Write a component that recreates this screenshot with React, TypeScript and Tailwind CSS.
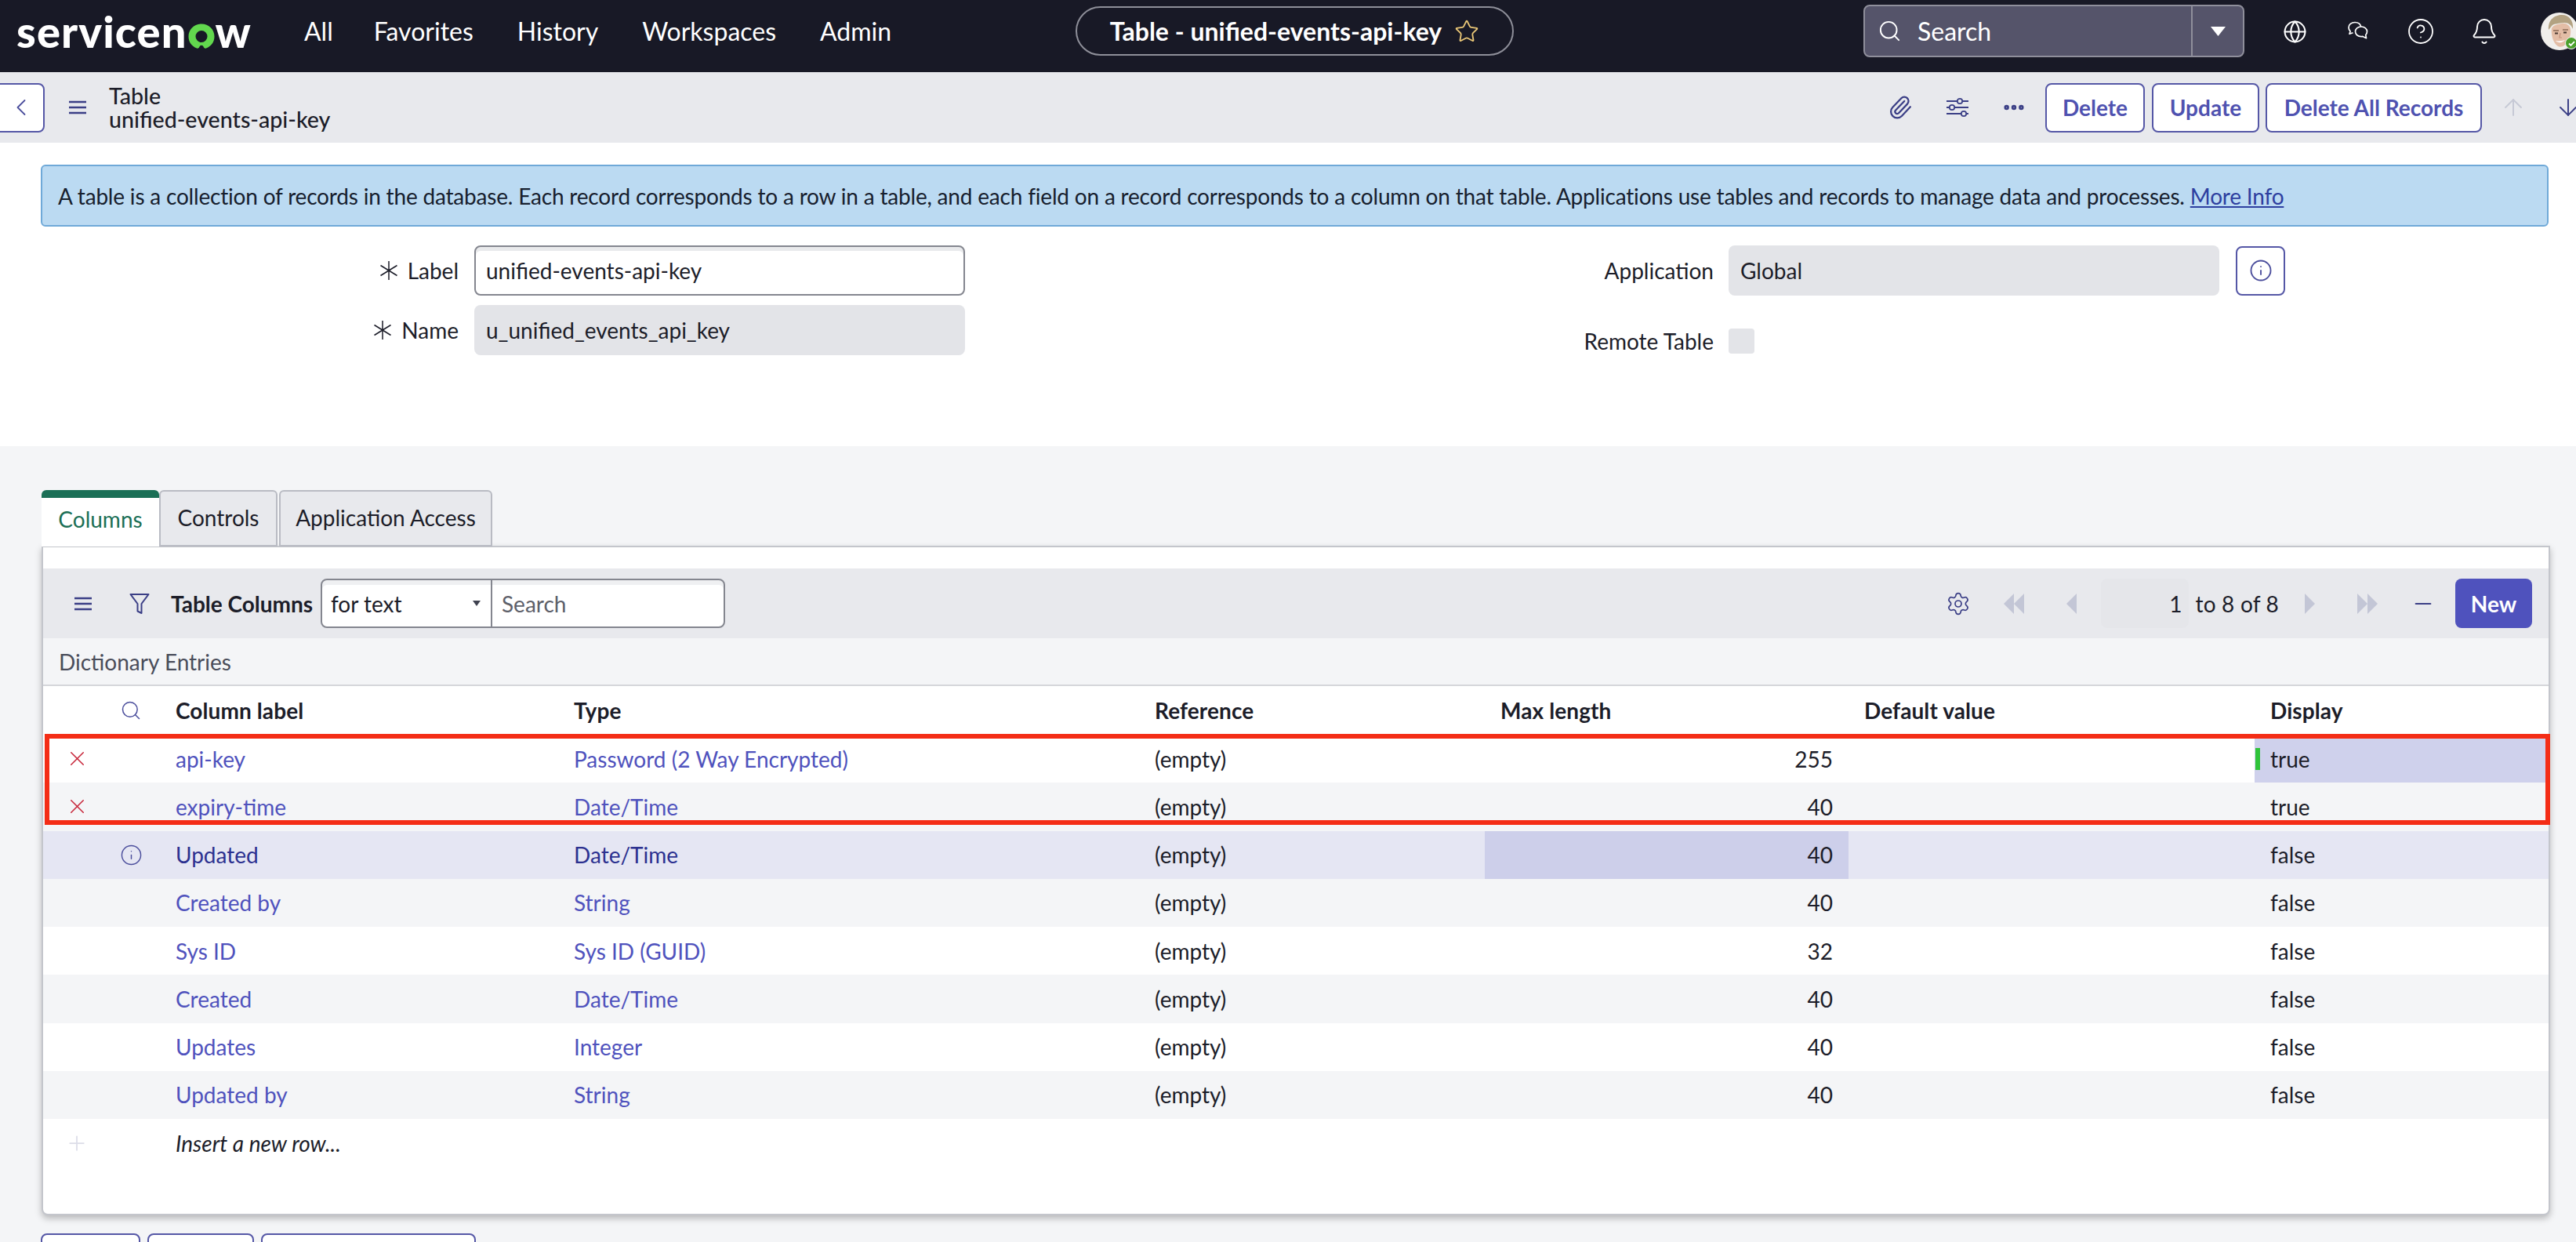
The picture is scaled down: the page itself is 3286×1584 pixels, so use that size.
import React from 'react';
import {
  ArrowDown,
  ArrowUp,
  Bell,
  ChevronLeft,
  CircleHelp,
  Ellipsis,
  Globe,
  Info,
  Minus,
  Paperclip,
  Plus,
  Search,
  Settings,
  Star,
  X,
} from 'lucide-react';

const rows = [
  { label: 'api-key', type: 'Password (2 Way Encrypted)', max: '255', display: 'true', mark: 'x' },
  { label: 'expiry-time', type: 'Date/Time', max: '40', display: 'true', mark: 'x' },
  { label: 'Updated', type: 'Date/Time', max: '40', display: 'false', mark: 'info' },
  { label: 'Created by', type: 'String', max: '40', display: 'false', mark: '' },
  { label: 'Sys ID', type: 'Sys ID (GUID)', max: '32', display: 'false', mark: '' },
  { label: 'Created', type: 'Date/Time', max: '40', display: 'false', mark: '' },
  { label: 'Updates', type: 'Integer', max: '40', display: 'false', mark: '' },
  { label: 'Updated by', type: 'String', max: '40', display: 'false', mark: '' },
];

const gridCols = 'grid grid-cols-[86px_63px_508px_741px_441px_464px_518px_375px]';

const HamburgerIcon = () => (
  <svg width="24" height="20" viewBox="0 0 24 20" fill="none" stroke="#3b3f86" strokeWidth="2.4">
    <path d="M1 3h22M1 10h22M1 17h22" />
  </svg>
);

const SlidersIcon = () => (
  <svg width="28" height="28" viewBox="0 0 28 28" fill="none" stroke="#3b3f86" strokeWidth="1.8" className="shrink-0 ml-[43px]">
    <path d="M0 6h28M0 14h28M0 22h28" />
    <circle cx="17" cy="6" r="3.200" fill="#e8e9ed" />
    <circle cx="7" cy="14" r="3.200" fill="#e8e9ed" />
    <circle cx="22" cy="22" r="3.200" fill="#e8e9ed" />
  </svg>
);

const RequiredMark = () => (
  <svg width="26" height="26" viewBox="0 0 26 26" fill="none" stroke="#1c1d29" strokeWidth="1.5">
    <path d="M13 1v24M2.500 6.500l21 13M23.500 6.500l-21 13" />
  </svg>
);

const ChatIcon = () => (
  <svg width="30" height="28" viewBox="0 0 30 28" fill="none" stroke="white" strokeWidth="1.7" strokeLinejoin="round">
    <path d="M11 2.500c-4.600 0-8 2.800-8 6.700 0 1.900.8 3.500 2.100 4.700l-1.100 3.400 4.500-1.600" />
    <path d="M11 2.500c4 0 7 2.300 7.700 5.500" />
    <path d="M19 8c4.400 0 7.500 2.700 7.500 6.200 0 1.700-.7 3.200-1.800 4.300l.8 4.200-4.600-2.300c-.6.1-1.200.2-1.900.2-4.400 0-7.500-2.800-7.500-6.300S14.600 8 19 8z" />
  </svg>
);

const FunnelIcon = () => (
  <svg width="26" height="28" viewBox="0 0 26 28" fill="none" stroke="#3b3f86" strokeWidth="2" strokeLinejoin="round">
    <path d="M1.500 2h23L15.500 14v12l-5-2.500V14z" />
  </svg>
);

const PageArrow = ({ d, width }: { d: string; width: number }) => (
  <svg width={width} height="26" viewBox={`0 0 ${width} 26`} fill="#c3c6d6">
    <path d={d} />
  </svg>
);

const Avatar = () => (
  <div className="relative w-[48px] h-[48px] shrink-0">
    <svg width="48" height="48" viewBox="0 0 48 48" className="rounded-full">
      <rect width="48" height="48" fill="#f1efec" />
      <path d="M10 22C9 9 18 3 27 3c9 0 15 7 14 18-2-5-5-8-11-8-7 1-12 1-15 3-2 2-3 4-5 6z" fill="#b3a282" />
      <path d="M14 20c2-4 7-5 13-6 5-1 10 2 11 7 1 8-2 16-8 21-4 3-9 2-12-3-3-5-5-12-4-19z" fill="#e3bda6" />
      <path d="M16 23h7M28 22h7" stroke="#8a6a55" strokeWidth="1.6" />
      <path d="M18 26.500h4M29 25.500h4" stroke="#4a3a32" strokeWidth="2" />
      <path d="M25 26l-1 6h3" stroke="#c0917a" strokeWidth="1.2" fill="none" />
      <path d="M19 36c3 3 9 3 12-1-3 1-8 2-12 1z" fill="#fff" />
    </svg>
    <div className="absolute right-[1px] bottom-[1px] w-[16px] h-[16px] rounded-full bg-[#4aa02c] border border-[#f2f2f2] flex items-center justify-center">
      <svg width="9" height="7" viewBox="0 0 11 9" fill="none" stroke="white" strokeWidth="2.4">
        <path d="M1 4.500l3 3 6-6" />
      </svg>
    </div>
  </div>
);

const Logo = () => (
  <div className="flex items-center h-[60px] w-[297px] text-white font-black text-[56px] leading-[60px] tracking-[1.1px]">
    <span>servicen</span>
    <svg width="38" height="36" viewBox="0 0 38 36" className="mt-[13px] mx-[-1px] shrink-0">
      <path
        d="M13 33.500C6.500 31 2.500 25.500 2.500 18.500 2.500 9.500 9.500 2.500 19 2.500s16.500 7 16.500 16c0 7-4 12.500-10.500 15-1.500.6-2.700-.3-3.200-1.500-.6-1.500-1.600-2.300-2.800-2.300s-2.200.8-2.800 2.300c-.5 1.200-1.700 2.100-3.200 1.500zM19 11a7.500 7.500 0 1 0 0 15 7.500 7.500 0 0 0 0-15z"
        fill="#62d84e"
        fillRule="evenodd"
      />
    </svg>
    <span>w</span>
  </div>
);

const OutlineButton = ({ children, className }: { children?: React.ReactNode; className: string }) => (
  <button className={`h-[63px] bg-white border-2 border-[#5557a6] rounded-[8px] text-[#4f52b0] text-[28px] font-bold shrink-0 ${className}`}>
    {children}
  </button>
);

const TopNav = () => (
  <div className="flex items-center h-[92px] bg-[#181926] text-white">
    <div className="flex items-center w-[1372px] pl-[21px] shrink-0 mb-[13px]">
      <Logo />
      <div className="flex items-center gap-[56px] ml-[70px] text-[32px]">
        <span className="mr-[-4px]">All</span>
        <span>Favorites</span>
        <span>History</span>
        <span>Workspaces</span>
        <span>Admin</span>
      </div>
    </div>
    <div className="flex items-center justify-center gap-[16px] w-[559px] h-[63px] border-2 border-[#8e8f99] rounded-full text-[32px] font-bold shrink-0 mb-[13px]">
      <span>Table - unified-events-api-key</span>
      <Star className="w-[32px] h-[32px] text-[#eac777]" strokeWidth={1.4} />
    </div>
    <div className="flex items-center h-[67px] w-[486px] ml-[446px] bg-[#55546a] border-2 border-[#8f8f9b] rounded-[8px] shrink-0 mb-[13px]">
      <div className="flex items-center flex-1 h-full pl-[16px] gap-[20px] border-r-2 border-[#8f8f9b]">
        <Search className="w-[31px] h-[31px] shrink-0 text-white" strokeWidth={1.5} />
        <span className="text-[32px]">Search</span>
      </div>
      <div className="flex items-center justify-center w-[64px]">
        <svg width="19" height="12" viewBox="0 0 19 12" fill="white">
          <path d="M0 0h19L9.500 12z" />
        </svg>
      </div>
    </div>
    <div className="flex items-center ml-[49px] shrink-0 mb-[12px]">
      <Globe className="w-[31px] h-[31px] mr-[50px]" strokeWidth={1.6} />
      <ChatIcon />
      <CircleHelp className="w-[36px] h-[36px] ml-[47px]" strokeWidth={1.2} />
      <Bell className="w-[36px] h-[36px] ml-[45px]" strokeWidth={1.3} />
      <div className="ml-[54px]">
        <Avatar />
      </div>
    </div>
  </div>
);

const SubBar = () => (
  <div className="flex items-center h-[90px] bg-[#e8e9ed] overflow-hidden">
    <div className="flex items-center justify-center w-[65px] h-[63px] ml-[-8px] bg-white border-2 border-[#5557a6] rounded-[8px] shrink-0 pl-[4px]">
      <ChevronLeft className="w-[36px] h-[36px] text-[#4b4e9c]" strokeWidth={1.2} />
    </div>
    <div className="ml-[30px] shrink-0">
      <HamburgerIcon />
    </div>
    <div className="ml-[28px] text-[28.6px] leading-[30px] font-medium text-[#1c1d29] w-[2279px] shrink-0">
      <div>Table</div>
      <div>unified-events-api-key</div>
    </div>
    <Paperclip className="w-[32px] h-[32px] text-[#3b3f86] ml-[-10px] shrink-0 rotate-[-1deg]" strokeWidth={1.7} />
    <SlidersIcon />
    <Ellipsis className="w-[32px] h-[32px] text-[#3b3f86] ml-[42px] shrink-0" strokeWidth={2.8} />
    <OutlineButton className="w-[127px] ml-[24px]">Delete</OutlineButton>
    <OutlineButton className="w-[137px] ml-[9px]">Update</OutlineButton>
    <OutlineButton className="w-[276px] ml-[8px]">Delete All Records</OutlineButton>
    <ArrowUp className="w-[34px] h-[34px] text-[#c6c9d5] ml-[23px] shrink-0" strokeWidth={1.4} />
    <ArrowDown className="w-[34px] h-[34px] text-[#3b3f86] ml-[36px] shrink-0" strokeWidth={1.4} />
  </div>
);

const FormSection = () => (
  <div className="h-[387px] bg-white pt-[28px]">
    <div className="flex items-center h-[79px] w-[3199px] ml-[52px] pl-[20px] bg-[#bbdaf2] border-2 border-[#6fa9d8] rounded-[6px] text-[28px] tracking-[-0.19px] text-[#17202e] whitespace-nowrap">
      <span>
        A table is a collection of records in the database. Each record corresponds to a row in a table, and each field on a record corresponds to a column on that table. Applications use tables and records to manage data and processes.{' '}
        <span className="text-[#2e3fa0] underline">More Info</span>
      </span>
    </div>
    <div className="flex mt-[24px] text-[28px] text-[#1c1d29]">
      <div className="flex flex-col gap-[12px] w-[1231px] shrink-0">
        <div className="flex items-center h-[64px]">
          <div className="flex items-center justify-end gap-[11px] w-[585px]">
            <RequiredMark />
            <span>Label</span>
          </div>
          <div className="flex items-center w-[626px] h-[64px] ml-[20px] pl-[13px] bg-white border-2 border-[#84868f] rounded-[8px] shadow-[inset_0_5px_0_#e9eaec]">
            unified-events-api-key
          </div>
        </div>
        <div className="flex items-center h-[64px]">
          <div className="flex items-center justify-end gap-[11px] w-[585px]">
            <RequiredMark />
            <span>Name</span>
          </div>
          <div className="flex items-center w-[626px] h-[64px] ml-[20px] pl-[15px] bg-[#e3e4e8] rounded-[8px]">
            u_unified_events_api_key
          </div>
        </div>
      </div>
      <div className="flex flex-col">
        <div className="flex items-center h-[64px]">
          <div className="w-[955px] text-right shrink-0">Application</div>
          <div className="flex items-center w-[626px] h-[64px] ml-[19px] pl-[15px] bg-[#e3e4e8] rounded-[8px] shrink-0">Global</div>
          <div className="flex items-center justify-center w-[63px] h-[63px] ml-[21px] border-2 border-[#5557a6] rounded-[8px] shrink-0">
            <Info className="w-[30px] h-[30px] text-[#4b4e9c]" strokeWidth={1.5} />
          </div>
        </div>
        <div className="flex items-center h-[32px] mt-[42px]">
          <div className="w-[955px] text-right shrink-0">Remote Table</div>
          <div className="w-[33px] h-[32px] ml-[19px] bg-[#e3e4e8] rounded-[4px]" />
        </div>
      </div>
    </div>
  </div>
);

const Tabs = () => (
  <div className="flex items-end h-[72px] ml-[53px] text-[28px] relative z-10">
    <div className="flex items-center justify-center w-[150px] h-[72px] bg-white border-t-[10px] border-[#1b6f56] rounded-t-[6px] text-[#1b6f56] pb-[8px]">Columns</div>
    <div className="flex items-center justify-center w-[151px] h-[72px] bg-[#e8e9ed] border-2 border-[#b9bbc3] rounded-t-[6px] text-[#1c1d29] pb-[2px]">Controls</div>
    <div className="flex items-center justify-center w-[272px] h-[72px] ml-[2px] bg-[#e8e9ed] border-2 border-[#b9bbc3] rounded-t-[6px] text-[#1c1d29] pb-[2px]">Application Access</div>
  </div>
);

const Toolbar = () => (
  <div className="flex items-center h-[89px] bg-[#e8e9ed] text-[28px]">
    <div className="ml-[39px]">
      <HamburgerIcon />
    </div>
    <div className="ml-[47px]">
      <FunnelIcon />
    </div>
    <span className="ml-[27px] w-[191px] font-bold text-[#1c1d29] whitespace-nowrap">Table Columns</span>
    <div className="flex h-[63px] w-[516px] bg-white border-2 border-[#84868f] rounded-[8px] shadow-[inset_0_6px_0_#eff0f2] shrink-0">
      <div className="flex items-center justify-between w-[217px] pl-[11px] pr-[13px] border-r-2 border-[#84868f] text-[#1c1d29]">
        for text
        <svg width="10" height="7" viewBox="0 0 10 7" fill="#3f4250">
          <path d="M0 0h10L5 7z" />
        </svg>
      </div>
      <div className="flex items-center pl-[12px] text-[#5d6069]">Search</div>
    </div>
    <div className="flex items-center flex-1 justify-end pr-[21px]">
      <Settings className="w-[32px] h-[32px] text-[#3b3f86] mr-[2px]" strokeWidth={1.3} />
      <div className="ml-[40px]">
        <PageArrow width={26} d="M13 0v26L0 13zM26 0v26L13 13z" />
      </div>
      <div className="ml-[54px]">
        <PageArrow width={13} d="M13 0v26L0 13z" />
      </div>
      <div className="flex items-center justify-end w-[112px] h-[63px] ml-[31px] pr-[8px] bg-[#e5e6ea] rounded-[8px] text-[#1c1d29]">1</div>
      <span className="ml-[9px] text-[#1c1d29] tracking-[0.2px]">to 8 of 8</span>
      <div className="ml-[33px]">
        <PageArrow width={13} d="M0 0v26L13 13z" />
      </div>
      <div className="ml-[54px]">
        <PageArrow width={26} d="M0 0v26L13 13zM13 0v26L26 13z" />
      </div>
      <Minus className="w-[32px] h-[32px] text-[#3b3f86] ml-[42px]" strokeWidth={1.6} />
      <button className="w-[98px] h-[63px] ml-[25px] bg-[#4f52bd] rounded-[8px] text-white font-bold">New</button>
    </div>
  </div>
);

const TableRows = () => (
  <div className="relative text-[28px]">
    {rows.map((row, index) => {
      const isUpdated = row.label === 'Updated';
      const linkColor = isUpdated ? 'text-[#2c3190]' : 'text-[#4f52bd]';
      const rowBg = isUpdated ? 'bg-[#e5e6f3]' : index % 2 === 0 ? 'bg-white' : 'bg-[#f4f5f7]';
      return (
        <div key={row.label} className={`${gridCols} items-center h-[61.25px] text-[#1c1d29] ${rowBg}`}>
          <div className="flex items-center justify-center">
            {row.mark === 'x' && <X className="w-[31px] h-[31px] text-[#c8283c]" strokeWidth={1.2} />}
          </div>
          <div className="flex items-center pl-[12px]">
            {row.mark === 'info' && <Info className="w-[29px] h-[29px] text-[#4b4e9c]" strokeWidth={1.2} />}
          </div>
          <div className={`pl-[20px] ${linkColor}`}>{row.label}</div>
          <div className={`pl-[20px] ${linkColor}`}>{row.type}</div>
          <div className="pl-[20px]">(empty)</div>
          <div className={`h-full flex items-center justify-end pr-[20px] ${isUpdated ? 'bg-[#cdcfea]' : ''}`}>{row.max}</div>
          <div />
          <div className={`relative h-full flex items-center pl-[20px] ${index === 0 ? 'bg-[#cfd1ec]' : ''}`}>
            {index === 0 && <div className="absolute left-[1px] top-[17px] w-[6px] h-[28px] bg-[#2fc43a]" />}
            {row.display}
          </div>
        </div>
      );
    })}
    {/* Red box drawn over the first two rows */}
    <div className="absolute left-[2px] top-[-1px] w-[3196px] h-[116px] border-[6px] border-[#f42d16] pointer-events-none" />
  </div>
);

const ColumnsPanel = () => (
  <div className="ml-[53px] w-[3200px] h-[854px] mt-[-1px] pt-[27px] bg-white border-2 border-[#c4c6cc] rounded-b-[8px] shadow-[0_4px_8px_rgba(0,0,0,0.25)]">
    <Toolbar />
    <div className="flex items-center h-[61px] pl-[20px] bg-[#f4f5f7] border-b-2 border-[#d5d6da] text-[28px] text-[#4a4d5a]">Dictionary Entries</div>
    <div className={`${gridCols} items-center h-[62px] text-[28px] font-bold text-[#1c1d29] tracking-[0.1px]`}>
      <div />
      <div className="flex items-center pl-[12px]">
        <Search className="w-[28px] h-[28px] text-[#4b4e9c]" strokeWidth={1.3} />
      </div>
      <div className="pl-[20px]">Column label</div>
      <div className="pl-[20px]">Type</div>
      <div className="pl-[20px]">Reference</div>
      <div className="pl-[20px]">Max length</div>
      <div className="pl-[20px]">Default value</div>
      <div className="pl-[20px]">Display</div>
    </div>
    <TableRows />
    <div className={`${gridCols} items-center h-[61px] text-[28px] text-[#1c1d29]`}>
      <div className="flex items-center justify-center">
        <Plus className="w-[30px] h-[30px] text-[#dcdde8]" strokeWidth={1.4} />
      </div>
      <div />
      <div className="pl-[20px] italic">Insert a new row...</div>
    </div>
  </div>
);

export default function App() {
  return (
    <div className="w-[3286px] h-[1584px] overflow-hidden bg-[#f4f5f7] font-['Lato',sans-serif]">
      <TopNav />
      <SubBar />
      <FormSection />
      <div className="h-[56px]" />
      <Tabs />
      <ColumnsPanel />
      {/* Bottom copies of the form buttons: only their top edge fits on the page */}
      <div className="flex gap-[9px] ml-[52px] mt-[23px]">
        <OutlineButton className="w-[127px]" />
        <OutlineButton className="w-[136px]" />
        <OutlineButton className="w-[274px]" />
      </div>
    </div>
  );
}
